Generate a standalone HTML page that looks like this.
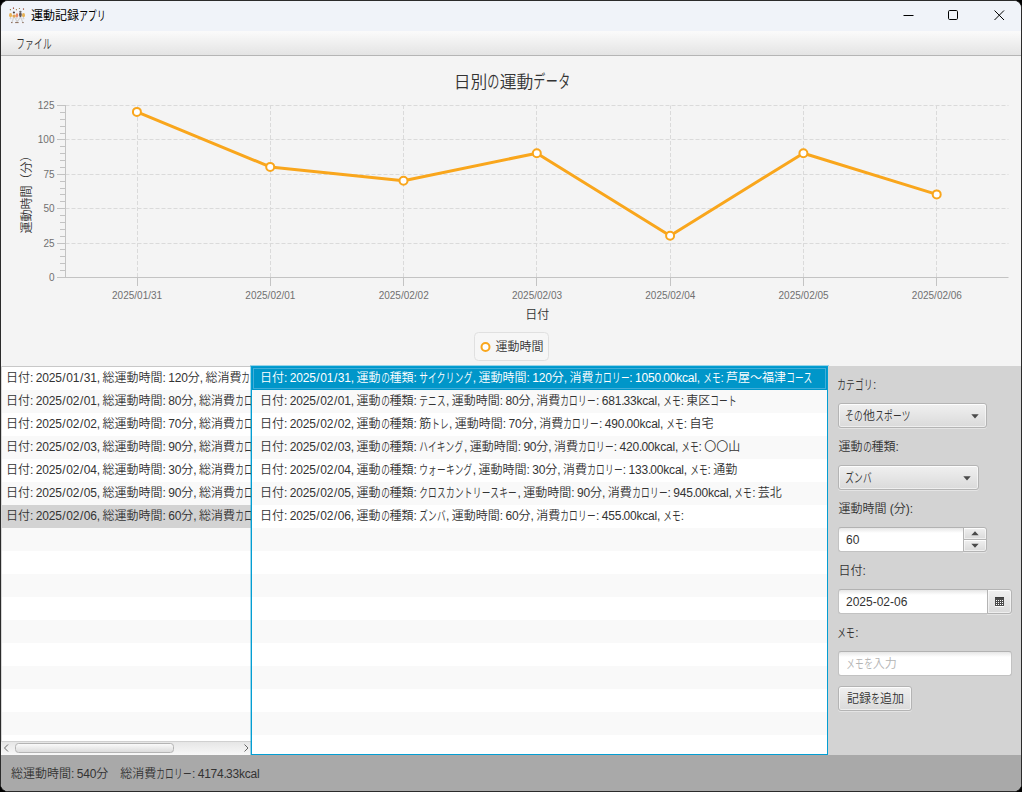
<!DOCTYPE html>
<html lang="ja"><head><meta charset="utf-8"><title>運動記録アプリ</title>
<style>
html,body{margin:0;padding:0;background:#000;}
body{width:1022px;height:792px;overflow:hidden;position:relative;
 font-family:"Liberation Sans","Noto Sans CJK JP",sans-serif;font-size:12px;color:#333;line-height:17px;font-weight:350;}
#win{position:absolute;left:0;top:0;width:1020px;height:790px;border:1px solid #2b2b2b;border-radius:8px;overflow:hidden;background:#f4f4f4;}
#pg{position:absolute;left:-1px;top:-1px;width:1022px;height:792px;}
.abs{position:absolute;}
.k{display:inline-block;white-space:nowrap;vertical-align:baseline;line-height:0;}
.k i{display:inline-block;font-style:normal;transform-origin:0 50%;white-space:nowrap;line-height:0;}
.t{position:absolute;white-space:nowrap;line-height:17px;height:17px;}
/* title bar */
#tb{position:absolute;left:0;top:0;width:1022px;height:31px;background:#f0f3f9;}
#tb .title{left:31px;top:8px;color:#000;font-weight:400;}
/* menubar */
#mb{position:absolute;left:0;top:31px;width:1022px;height:25px;box-sizing:border-box;border-top:1px solid #fafafa;border-bottom:1px solid #b5b5b5;
 background:linear-gradient(to bottom,#fafafa 0%,#e4e4e4 100%);}
#mb .t{left:16px;top:4px;}
/* chart */
#chart{position:absolute;left:0;top:56px;width:1022px;height:310px;background:#f4f4f4;}
#chart svg{position:absolute;left:0;top:-56px;}
#chart text{font-family:"Liberation Sans","Noto Sans CJK JP",sans-serif;}
/* lists */
.list{position:absolute;background:#fff;overflow:hidden;}
.row{position:absolute;left:0;right:0;height:23px;line-height:23px;white-space:nowrap;overflow:hidden;}
.row.odd{background:#f9f9f9;}
.row .tx{position:absolute;top:0;white-space:nowrap;}
#l1{left:1px;top:366px;width:250px;height:389px;}
#l1 .bd{position:absolute;left:0;top:0;width:250px;height:1px;background:#c8c8c8;}
#l1 .bl{position:absolute;left:0;top:0;width:1px;height:389px;background:#d6d6d6;}
#l2{left:250px;top:365px;width:579px;height:391px;background:rgba(3,158,211,.38);overflow:visible;}
#l2 .in{position:absolute;left:2px;top:2px;right:2px;bottom:2px;background:#fff;overflow:hidden;box-shadow:0 0 0 1px #039ed3;}
#panel{position:absolute;left:828px;top:366px;width:194px;height:389px;background:#d3d3d3;}
#status{position:absolute;left:0;top:755px;width:1022px;height:37px;background:#a9a9a9;}
/* panel controls (coords relative to #panel: page x-828, y-366) */
#panel > .t{left:10.5px;}
.btn{position:absolute;box-sizing:border-box;border:1px solid #b4b4b4;border-radius:3px;
 background:linear-gradient(to bottom,#f0f0f0,#dadada);box-shadow:inset 0 1px 0 #fdfdfd, inset 0 0 0 1px rgba(255,255,255,.55), 0 1px 0 rgba(255,255,255,.4);}
.btn .t{top:4px;}
.tf{position:absolute;box-sizing:border-box;border:1px solid #c2c2c2;border-top-color:#b2b2b2;border-radius:3px;
 background:linear-gradient(to bottom,#e6e6e6 0,#fff 5px,#fff 100%);}
.tf .t{top:4px;left:7px;}
.k i.ka{font-weight:inherit;}
b{font-weight:inherit;}
b.p{letter-spacing:-0.95px;}
b.s{margin:0 .65px;}
b.d{letter-spacing:-0.2px;}

</style></head>
<body>
<div id="win"><div id="pg">

<div id="tb">
 <svg class="abs" style="left:9px;top:7px" width="16" height="17" viewBox="0 0 16 17">
  <ellipse cx="1.4" cy="2.7" rx=".65" ry=".65" fill="#8a6a30"/><ellipse cx="4.5" cy="1.2" rx=".65" ry=".9" fill="#a85a48"/><ellipse cx="7.4" cy="2.7" rx=".6" ry=".6" fill="#9a7840"/><ellipse cx="10.4" cy="1.5" rx=".6" ry=".6" fill="#8a7038"/><ellipse cx="14.5" cy="2" rx=".65" ry=".85" fill="#a05038"/>
  <path d="M4.6 10.5L3 15.2M5.6 10.5L8.6 15.2M11 10.5L9.2 13.5L7.2 15.2M11.8 10.5L13.8 15.2M1.5 10.3v1.4M14.4 10.3v1.4M7.9 10.3v1.2" stroke="#d2d2d2" stroke-width="1.2" fill="none" stroke-linecap="round"/>
  <path d="M0.3 11.6h3M13 11.6h3" stroke="#d8d8dc" stroke-width=".5"/>
  <ellipse cx="1.55" cy="8.2" rx="1.5" ry="2.15" fill="#e8b256"/><ellipse cx="14.5" cy="8.2" rx="1.5" ry="2.15" fill="#e8b256"/>
  <ellipse cx="5.1" cy="8.9" rx="1.7" ry="1.5" fill="#e2a450"/><ellipse cx="4.9" cy="5.6" rx="1.1" ry="1" fill="#4e3e3c"/>
  <ellipse cx="7.95" cy="8.3" rx="1.25" ry="2.1" fill="#e98c6a"/>
  <ellipse cx="11.4" cy="7.6" rx="1.35" ry="2.6" fill="#5e5454"/><ellipse cx="11.4" cy="4.6" rx="1.2" ry=".9" fill="#6e6a6a"/>
  <path d="M2 15.6h1.5M6.2 15.6h3.4M13.2 15.6h1.5" stroke="#8a6a58" stroke-width="1" fill="none"/>
 </svg>
 <div class="t title">運動記録<span class="k" style="width:26.82px"><i class="ka" style="font-size:12.96px;letter-spacing:0.45px;padding-left:0.22px;transform:scaleX(0.667)">アプリ</i></span></div>
 <svg class="abs" style="left:896px;top:0" width="124" height="30" viewBox="0 0 124 30">
  <path d="M7.5 15.5h10" stroke="#000" stroke-width="1" fill="none"/>
  <rect x="52.5" y="10.5" width="9" height="9" rx="1.2" fill="none" stroke="#000" stroke-width="1"/>
  <path d="M98.5 10.5l9.5 9.5M108 10.5l-9.5 9.5" stroke="#000" stroke-width="1" fill="none"/>
 </svg>
</div>
<div id="mb"><div class="t"><span class="k" style="width:35.76px"><i class="ka" style="font-size:12.96px;letter-spacing:0.45px;padding-left:0.22px;transform:scaleX(0.667)">ファイル</i></span></div></div>

<div id="chart"><svg width="1022" height="792" viewBox="0 0 1022 792">
<path d="M66.0 243.5H1008.5" stroke="#dadada" stroke-width="1" stroke-dasharray="4 2" stroke-dashoffset=".5" fill="none"/>
<path d="M66.0 208.5H1008.5" stroke="#dadada" stroke-width="1" stroke-dasharray="4 2" stroke-dashoffset=".5" fill="none"/>
<path d="M66.0 174.5H1008.5" stroke="#dadada" stroke-width="1" stroke-dasharray="4 2" stroke-dashoffset=".5" fill="none"/>
<path d="M66.0 139.5H1008.5" stroke="#dadada" stroke-width="1" stroke-dasharray="4 2" stroke-dashoffset=".5" fill="none"/>
<path d="M66.0 105.5H1008.5" stroke="#dadada" stroke-width="1" stroke-dasharray="4 2" stroke-dashoffset=".5" fill="none"/>
<path d="M137.5 105.5V277.5" stroke="#dadada" stroke-width="1" stroke-dasharray="4 2" stroke-dashoffset=".5" fill="none"/>
<path d="M270.5 105.5V277.5" stroke="#dadada" stroke-width="1" stroke-dasharray="4 2" stroke-dashoffset=".5" fill="none"/>
<path d="M403.5 105.5V277.5" stroke="#dadada" stroke-width="1" stroke-dasharray="4 2" stroke-dashoffset=".5" fill="none"/>
<path d="M536.5 105.5V277.5" stroke="#dadada" stroke-width="1" stroke-dasharray="4 2" stroke-dashoffset=".5" fill="none"/>
<path d="M670.5 105.5V277.5" stroke="#dadada" stroke-width="1" stroke-dasharray="4 2" stroke-dashoffset=".5" fill="none"/>
<path d="M803.5 105.5V277.5" stroke="#dadada" stroke-width="1" stroke-dasharray="4 2" stroke-dashoffset=".5" fill="none"/>
<path d="M936.5 105.5V277.5" stroke="#dadada" stroke-width="1" stroke-dasharray="4 2" stroke-dashoffset=".5" fill="none"/>
<path d="M65.5 105.0V278.0" stroke="#c3c3c3" stroke-width="1" fill="none"/>
<path d="M65.0 277.5H1008.5" stroke="#c3c3c3" stroke-width="1" fill="none"/>
<path d="M57 277.5H65" stroke="#c3c3c3" stroke-width="1"/>
<text x="54.5" y="281.0" font-size="10" fill="#707070" text-anchor="end">0</text>
<path d="M60 270.5H65" stroke="#c3c3c3" stroke-width="1"/>
<path d="M60 263.5H65" stroke="#c3c3c3" stroke-width="1"/>
<path d="M60 256.5H65" stroke="#c3c3c3" stroke-width="1"/>
<path d="M60 249.5H65" stroke="#c3c3c3" stroke-width="1"/>
<path d="M57 243.5H65" stroke="#c3c3c3" stroke-width="1"/>
<text x="54.5" y="247.0" font-size="10" fill="#707070" text-anchor="end">25</text>
<path d="M60 236.5H65" stroke="#c3c3c3" stroke-width="1"/>
<path d="M60 229.5H65" stroke="#c3c3c3" stroke-width="1"/>
<path d="M60 222.5H65" stroke="#c3c3c3" stroke-width="1"/>
<path d="M60 215.5H65" stroke="#c3c3c3" stroke-width="1"/>
<path d="M57 208.5H65" stroke="#c3c3c3" stroke-width="1"/>
<text x="54.5" y="212.0" font-size="10" fill="#707070" text-anchor="end">50</text>
<path d="M60 201.5H65" stroke="#c3c3c3" stroke-width="1"/>
<path d="M60 194.5H65" stroke="#c3c3c3" stroke-width="1"/>
<path d="M60 188.5H65" stroke="#c3c3c3" stroke-width="1"/>
<path d="M60 181.5H65" stroke="#c3c3c3" stroke-width="1"/>
<path d="M57 174.5H65" stroke="#c3c3c3" stroke-width="1"/>
<text x="54.5" y="178.0" font-size="10" fill="#707070" text-anchor="end">75</text>
<path d="M60 167.5H65" stroke="#c3c3c3" stroke-width="1"/>
<path d="M60 160.5H65" stroke="#c3c3c3" stroke-width="1"/>
<path d="M60 153.5H65" stroke="#c3c3c3" stroke-width="1"/>
<path d="M60 146.5H65" stroke="#c3c3c3" stroke-width="1"/>
<path d="M57 139.5H65" stroke="#c3c3c3" stroke-width="1"/>
<text x="54.5" y="143.0" font-size="10" fill="#707070" text-anchor="end">100</text>
<path d="M60 133.5H65" stroke="#c3c3c3" stroke-width="1"/>
<path d="M60 126.5H65" stroke="#c3c3c3" stroke-width="1"/>
<path d="M60 119.5H65" stroke="#c3c3c3" stroke-width="1"/>
<path d="M60 112.5H65" stroke="#c3c3c3" stroke-width="1"/>
<path d="M57 105.5H65" stroke="#c3c3c3" stroke-width="1"/>
<text x="54.5" y="109.0" font-size="10" fill="#707070" text-anchor="end">125</text>
<path d="M137.5 277.5V286.0" stroke="#c3c3c3" stroke-width="1"/>
<text x="137.1" y="299" font-size="10" fill="#707070" text-anchor="middle">2025/01/31</text>
<path d="M270.5 277.5V286.0" stroke="#c3c3c3" stroke-width="1"/>
<text x="270.4" y="299" font-size="10" fill="#707070" text-anchor="middle">2025/02/01</text>
<path d="M403.5 277.5V286.0" stroke="#c3c3c3" stroke-width="1"/>
<text x="403.7" y="299" font-size="10" fill="#707070" text-anchor="middle">2025/02/02</text>
<path d="M536.5 277.5V286.0" stroke="#c3c3c3" stroke-width="1"/>
<text x="537.0" y="299" font-size="10" fill="#707070" text-anchor="middle">2025/02/03</text>
<path d="M670.5 277.5V286.0" stroke="#c3c3c3" stroke-width="1"/>
<text x="670.3" y="299" font-size="10" fill="#707070" text-anchor="middle">2025/02/04</text>
<path d="M803.5 277.5V286.0" stroke="#c3c3c3" stroke-width="1"/>
<text x="803.6" y="299" font-size="10" fill="#707070" text-anchor="middle">2025/02/05</text>
<path d="M936.5 277.5V286.0" stroke="#c3c3c3" stroke-width="1"/>
<text x="936.9" y="299" font-size="10" fill="#707070" text-anchor="middle">2025/02/06</text>
<polyline points="136.9,111.9 270.2,166.9 403.5,180.7 536.8,153.2 670.1,235.7 803.4,153.2 936.7,194.4" fill="none" stroke="#f9a61c" stroke-width="3" stroke-linejoin="round" stroke-linecap="butt"/>
<circle cx="136.9" cy="111.9" r="4" fill="#fff" stroke="#f9a61c" stroke-width="2"/>
<circle cx="270.2" cy="166.9" r="4" fill="#fff" stroke="#f9a61c" stroke-width="2"/>
<circle cx="403.5" cy="180.7" r="4" fill="#fff" stroke="#f9a61c" stroke-width="2"/>
<circle cx="536.8" cy="153.2" r="4" fill="#fff" stroke="#f9a61c" stroke-width="2"/>
<circle cx="670.1" cy="235.7" r="4" fill="#fff" stroke="#f9a61c" stroke-width="2"/>
<circle cx="803.4" cy="153.2" r="4" fill="#fff" stroke="#f9a61c" stroke-width="2"/>
<circle cx="936.7" cy="194.4" r="4" fill="#fff" stroke="#f9a61c" stroke-width="2"/>
<rect x="474.5" y="332.5" width="74" height="28" rx="4" fill="#f6f6f6" stroke="#e0e0e0"/>
<circle cx="485.5" cy="347" r="4" fill="#fff" stroke="#f9a61c" stroke-width="2"/>
<text x="495.5" y="351.3" font-size="12" fill="#333">運動時間</text>
<text x="537.3" y="318.8" font-size="12" fill="#333" text-anchor="middle">日付</text>
<text transform="translate(31,191.5) rotate(-90)" font-size="12" fill="#333" text-anchor="middle">運動時間（分）</text>
</svg><div class="t" style="left:453.7px;top:15px;font-size:16.8px;line-height:24px;height:24px">日別<span class="k" style="width:12.52px"><i class="hi" style="font-size:17.64px;letter-spacing:0.61px;padding-left:0.31px;transform:scaleX(0.686)">の</i></span>運動<span class="k" style="width:37.55px"><i class="ka" style="font-size:18.14px;letter-spacing:0.63px;padding-left:0.31px;transform:scaleX(0.667)">データ</i></span></div></div>
<div class="list" id="l1">
<div class="row" style="top:1px;"><span class="tx" style="left:5px">日付<b class="p">:</b> <b class="d">2025</b><b class="s">/</b><b class="d">01</b><b class="s">/</b><b class="d">31</b><b class="p">,</b> 総運動時間<b class="p">:</b> <b class="d">120</b>分<b class="p">,</b> 総消費<span class="k" style="width:35.76px"><i class="ka" style="font-size:12.96px;letter-spacing:0.45px;padding-left:0.22px;transform:scaleX(0.667)">カロリー</i></span><b class="p">:</b> <b class="d">1050</b><b class="p">.</b><b class="d">00kcal</b></span></div>
<div class="row odd" style="top:24px;"><span class="tx" style="left:5px">日付<b class="p">:</b> <b class="d">2025</b><b class="s">/</b><b class="d">02</b><b class="s">/</b><b class="d">01</b><b class="p">,</b> 総運動時間<b class="p">:</b> <b class="d">80</b>分<b class="p">,</b> 総消費<span class="k" style="width:35.76px"><i class="ka" style="font-size:12.96px;letter-spacing:0.45px;padding-left:0.22px;transform:scaleX(0.667)">カロリー</i></span><b class="p">:</b> <b class="d">681</b><b class="p">.</b><b class="d">33kcal</b></span></div>
<div class="row" style="top:47px;"><span class="tx" style="left:5px">日付<b class="p">:</b> <b class="d">2025</b><b class="s">/</b><b class="d">02</b><b class="s">/</b><b class="d">02</b><b class="p">,</b> 総運動時間<b class="p">:</b> <b class="d">70</b>分<b class="p">,</b> 総消費<span class="k" style="width:35.76px"><i class="ka" style="font-size:12.96px;letter-spacing:0.45px;padding-left:0.22px;transform:scaleX(0.667)">カロリー</i></span><b class="p">:</b> <b class="d">490</b><b class="p">.</b><b class="d">00kcal</b></span></div>
<div class="row odd" style="top:70px;"><span class="tx" style="left:5px">日付<b class="p">:</b> <b class="d">2025</b><b class="s">/</b><b class="d">02</b><b class="s">/</b><b class="d">03</b><b class="p">,</b> 総運動時間<b class="p">:</b> <b class="d">90</b>分<b class="p">,</b> 総消費<span class="k" style="width:35.76px"><i class="ka" style="font-size:12.96px;letter-spacing:0.45px;padding-left:0.22px;transform:scaleX(0.667)">カロリー</i></span><b class="p">:</b> <b class="d">420</b><b class="p">.</b><b class="d">00kcal</b></span></div>
<div class="row" style="top:93px;"><span class="tx" style="left:5px">日付<b class="p">:</b> <b class="d">2025</b><b class="s">/</b><b class="d">02</b><b class="s">/</b><b class="d">04</b><b class="p">,</b> 総運動時間<b class="p">:</b> <b class="d">30</b>分<b class="p">,</b> 総消費<span class="k" style="width:35.76px"><i class="ka" style="font-size:12.96px;letter-spacing:0.45px;padding-left:0.22px;transform:scaleX(0.667)">カロリー</i></span><b class="p">:</b> <b class="d">133</b><b class="p">.</b><b class="d">00kcal</b></span></div>
<div class="row odd" style="top:116px;"><span class="tx" style="left:5px">日付<b class="p">:</b> <b class="d">2025</b><b class="s">/</b><b class="d">02</b><b class="s">/</b><b class="d">05</b><b class="p">,</b> 総運動時間<b class="p">:</b> <b class="d">90</b>分<b class="p">,</b> 総消費<span class="k" style="width:35.76px"><i class="ka" style="font-size:12.96px;letter-spacing:0.45px;padding-left:0.22px;transform:scaleX(0.667)">カロリー</i></span><b class="p">:</b> <b class="d">945</b><b class="p">.</b><b class="d">00kcal</b></span></div>
<div class="row" style="top:139px;background:#d3d3d3;"><span class="tx" style="left:5px">日付<b class="p">:</b> <b class="d">2025</b><b class="s">/</b><b class="d">02</b><b class="s">/</b><b class="d">06</b><b class="p">,</b> 総運動時間<b class="p">:</b> <b class="d">60</b>分<b class="p">,</b> 総消費<span class="k" style="width:35.76px"><i class="ka" style="font-size:12.96px;letter-spacing:0.45px;padding-left:0.22px;transform:scaleX(0.667)">カロリー</i></span><b class="p">:</b> <b class="d">455</b><b class="p">.</b><b class="d">00kcal</b></span></div>
<div class="row odd" style="top:162px;"></div>
<div class="row" style="top:185px;"></div>
<div class="row odd" style="top:208px;"></div>
<div class="row" style="top:231px;"></div>
<div class="row odd" style="top:254px;"></div>
<div class="row" style="top:277px;"></div>
<div class="row odd" style="top:300px;"></div>
<div class="row" style="top:323px;"></div>
<div class="row odd" style="top:346px;"></div>
<div class="row" style="top:369px;"></div>
<div class="bd"></div><div class="bl"></div>
<div class="abs" style="left:0;top:375px;width:250px;height:14px;background:linear-gradient(to bottom,#e6e6e6,#f8f8f8);border-top:1px solid #d0d0d0;box-sizing:border-box"></div>
<div class="abs" style="left:14px;top:377px;width:159px;height:10px;box-sizing:border-box;border:1px solid #b4b4b4;border-radius:3.5px;background:linear-gradient(to bottom,#fafafa,#dcdcdc)"></div>
<svg class="abs" style="left:0;top:375px" width="250" height="14" viewBox="0 0 250 14"><path d="M7 3.5L3.5 7L7 10.5M243.5 3.5L247 7L243.5 10.5" fill="none" stroke="#666" stroke-width="1"/></svg>
</div>
<div class="list" id="l2"><div class="in">
<div class="row" style="top:0px;background:#0096c9;color:#fff;box-shadow:inset 0 0 0 1px #0096c9, inset 0 0 0 2px #42aed9;"><span class="tx" style="left:8px">日付<b class="p">:</b> <b class="d">2025</b><b class="s">/</b><b class="d">01</b><b class="s">/</b><b class="d">31</b><b class="p">,</b> 運動<span class="k" style="width:8.94px"><i class="hi" style="font-size:12.6px;letter-spacing:0.44px;padding-left:0.22px;transform:scaleX(0.686)">の</i></span>種類<b class="p">:</b> <span class="k" style="width:53.64px"><i class="ka" style="font-size:12.96px;letter-spacing:0.45px;padding-left:0.22px;transform:scaleX(0.667)">サイクリング</i></span><b class="p">,</b> 運動時間<b class="p">:</b> <b class="d">120</b>分<b class="p">,</b> 消費<span class="k" style="width:35.76px"><i class="ka" style="font-size:12.96px;letter-spacing:0.45px;padding-left:0.22px;transform:scaleX(0.667)">カロリー</i></span><b class="p">:</b> <b class="d">1050</b><b class="p">.</b><b class="d">00kcal</b><b class="p">,</b> <span class="k" style="width:17.88px"><i class="ka" style="font-size:12.96px;letter-spacing:0.45px;padding-left:0.22px;transform:scaleX(0.667)">メモ</i></span><b class="p">:</b> 芦屋～福津<span class="k" style="width:26.82px"><i class="ka" style="font-size:12.96px;letter-spacing:0.45px;padding-left:0.22px;transform:scaleX(0.667)">コース</i></span></span></div>
<div class="row odd" style="top:23px;"><span class="tx" style="left:8px">日付<b class="p">:</b> <b class="d">2025</b><b class="s">/</b><b class="d">02</b><b class="s">/</b><b class="d">01</b><b class="p">,</b> 運動<span class="k" style="width:8.94px"><i class="hi" style="font-size:12.6px;letter-spacing:0.44px;padding-left:0.22px;transform:scaleX(0.686)">の</i></span>種類<b class="p">:</b> <span class="k" style="width:26.82px"><i class="ka" style="font-size:12.96px;letter-spacing:0.45px;padding-left:0.22px;transform:scaleX(0.667)">テニス</i></span><b class="p">,</b> 運動時間<b class="p">:</b> <b class="d">80</b>分<b class="p">,</b> 消費<span class="k" style="width:35.76px"><i class="ka" style="font-size:12.96px;letter-spacing:0.45px;padding-left:0.22px;transform:scaleX(0.667)">カロリー</i></span><b class="p">:</b> <b class="d">681</b><b class="p">.</b><b class="d">33kcal</b><b class="p">,</b> <span class="k" style="width:17.88px"><i class="ka" style="font-size:12.96px;letter-spacing:0.45px;padding-left:0.22px;transform:scaleX(0.667)">メモ</i></span><b class="p">:</b> 東区<span class="k" style="width:26.82px"><i class="ka" style="font-size:12.96px;letter-spacing:0.45px;padding-left:0.22px;transform:scaleX(0.667)">コート</i></span></span></div>
<div class="row" style="top:46px;"><span class="tx" style="left:8px">日付<b class="p">:</b> <b class="d">2025</b><b class="s">/</b><b class="d">02</b><b class="s">/</b><b class="d">02</b><b class="p">,</b> 運動<span class="k" style="width:8.94px"><i class="hi" style="font-size:12.6px;letter-spacing:0.44px;padding-left:0.22px;transform:scaleX(0.686)">の</i></span>種類<b class="p">:</b> 筋<span class="k" style="width:17.88px"><i class="ka" style="font-size:12.96px;letter-spacing:0.45px;padding-left:0.22px;transform:scaleX(0.667)">トレ</i></span><b class="p">,</b> 運動時間<b class="p">:</b> <b class="d">70</b>分<b class="p">,</b> 消費<span class="k" style="width:35.76px"><i class="ka" style="font-size:12.96px;letter-spacing:0.45px;padding-left:0.22px;transform:scaleX(0.667)">カロリー</i></span><b class="p">:</b> <b class="d">490</b><b class="p">.</b><b class="d">00kcal</b><b class="p">,</b> <span class="k" style="width:17.88px"><i class="ka" style="font-size:12.96px;letter-spacing:0.45px;padding-left:0.22px;transform:scaleX(0.667)">メモ</i></span><b class="p">:</b> 自宅</span></div>
<div class="row odd" style="top:69px;"><span class="tx" style="left:8px">日付<b class="p">:</b> <b class="d">2025</b><b class="s">/</b><b class="d">02</b><b class="s">/</b><b class="d">03</b><b class="p">,</b> 運動<span class="k" style="width:8.94px"><i class="hi" style="font-size:12.6px;letter-spacing:0.44px;padding-left:0.22px;transform:scaleX(0.686)">の</i></span>種類<b class="p">:</b> <span class="k" style="width:44.7px"><i class="ka" style="font-size:12.96px;letter-spacing:0.45px;padding-left:0.22px;transform:scaleX(0.667)">ハイキング</i></span><b class="p">,</b> 運動時間<b class="p">:</b> <b class="d">90</b>分<b class="p">,</b> 消費<span class="k" style="width:35.76px"><i class="ka" style="font-size:12.96px;letter-spacing:0.45px;padding-left:0.22px;transform:scaleX(0.667)">カロリー</i></span><b class="p">:</b> <b class="d">420</b><b class="p">.</b><b class="d">00kcal</b><b class="p">,</b> <span class="k" style="width:17.88px"><i class="ka" style="font-size:12.96px;letter-spacing:0.45px;padding-left:0.22px;transform:scaleX(0.667)">メモ</i></span><b class="p">:</b> 〇〇山</span></div>
<div class="row" style="top:92px;"><span class="tx" style="left:8px">日付<b class="p">:</b> <b class="d">2025</b><b class="s">/</b><b class="d">02</b><b class="s">/</b><b class="d">04</b><b class="p">,</b> 運動<span class="k" style="width:8.94px"><i class="hi" style="font-size:12.6px;letter-spacing:0.44px;padding-left:0.22px;transform:scaleX(0.686)">の</i></span>種類<b class="p">:</b> <span class="k" style="width:53.64px"><i class="ka" style="font-size:12.96px;letter-spacing:0.45px;padding-left:0.22px;transform:scaleX(0.667)">ウォーキング</i></span><b class="p">,</b> 運動時間<b class="p">:</b> <b class="d">30</b>分<b class="p">,</b> 消費<span class="k" style="width:35.76px"><i class="ka" style="font-size:12.96px;letter-spacing:0.45px;padding-left:0.22px;transform:scaleX(0.667)">カロリー</i></span><b class="p">:</b> <b class="d">133</b><b class="p">.</b><b class="d">00kcal</b><b class="p">,</b> <span class="k" style="width:17.88px"><i class="ka" style="font-size:12.96px;letter-spacing:0.45px;padding-left:0.22px;transform:scaleX(0.667)">メモ</i></span><b class="p">:</b> 通勤</span></div>
<div class="row odd" style="top:115px;"><span class="tx" style="left:8px">日付<b class="p">:</b> <b class="d">2025</b><b class="s">/</b><b class="d">02</b><b class="s">/</b><b class="d">05</b><b class="p">,</b> 運動<span class="k" style="width:8.94px"><i class="hi" style="font-size:12.6px;letter-spacing:0.44px;padding-left:0.22px;transform:scaleX(0.686)">の</i></span>種類<b class="p">:</b> <span class="k" style="width:98.34px"><i class="ka" style="font-size:12.96px;letter-spacing:0.45px;padding-left:0.22px;transform:scaleX(0.667)">クロスカントリースキー</i></span><b class="p">,</b> 運動時間<b class="p">:</b> <b class="d">90</b>分<b class="p">,</b> 消費<span class="k" style="width:35.76px"><i class="ka" style="font-size:12.96px;letter-spacing:0.45px;padding-left:0.22px;transform:scaleX(0.667)">カロリー</i></span><b class="p">:</b> <b class="d">945</b><b class="p">.</b><b class="d">00kcal</b><b class="p">,</b> <span class="k" style="width:17.88px"><i class="ka" style="font-size:12.96px;letter-spacing:0.45px;padding-left:0.22px;transform:scaleX(0.667)">メモ</i></span><b class="p">:</b> 芸北</span></div>
<div class="row" style="top:138px;"><span class="tx" style="left:8px">日付<b class="p">:</b> <b class="d">2025</b><b class="s">/</b><b class="d">02</b><b class="s">/</b><b class="d">06</b><b class="p">,</b> 運動<span class="k" style="width:8.94px"><i class="hi" style="font-size:12.6px;letter-spacing:0.44px;padding-left:0.22px;transform:scaleX(0.686)">の</i></span>種類<b class="p">:</b> <span class="k" style="width:26.82px"><i class="ka" style="font-size:12.96px;letter-spacing:0.45px;padding-left:0.22px;transform:scaleX(0.667)">ズンバ</i></span><b class="p">,</b> 運動時間<b class="p">:</b> <b class="d">60</b>分<b class="p">,</b> 消費<span class="k" style="width:35.76px"><i class="ka" style="font-size:12.96px;letter-spacing:0.45px;padding-left:0.22px;transform:scaleX(0.667)">カロリー</i></span><b class="p">:</b> <b class="d">455</b><b class="p">.</b><b class="d">00kcal</b><b class="p">,</b> <span class="k" style="width:17.88px"><i class="ka" style="font-size:12.96px;letter-spacing:0.45px;padding-left:0.22px;transform:scaleX(0.667)">メモ</i></span><b class="p">:</b> </span></div>
<div class="row odd" style="top:161px;"></div>
<div class="row" style="top:184px;"></div>
<div class="row odd" style="top:207px;"></div>
<div class="row" style="top:230px;"></div>
<div class="row odd" style="top:253px;"></div>
<div class="row" style="top:276px;"></div>
<div class="row odd" style="top:299px;"></div>
<div class="row" style="top:322px;"></div>
<div class="row odd" style="top:345px;"></div>
<div class="row" style="top:368px;"></div>
</div></div>
<div id="panel">
<div class="t" style="top:11px;margin-left:-1.3px"><span class="k" style="width:35.76px"><i class="ka" style="font-size:12.96px;letter-spacing:0.45px;padding-left:0.22px;transform:scaleX(0.667)">カテゴリ</i></span><b class="p">:</b></div>
<div class="btn" style="left:10px;top:37px;width:149px;height:25px"><div class="t" style="left:6px"><span class="k" style="width:17.88px"><i class="hi" style="font-size:12.6px;letter-spacing:0.44px;padding-left:0.22px;transform:scaleX(0.686)">その</i></span>他<span class="k" style="width:35.76px"><i class="ka" style="font-size:12.96px;letter-spacing:0.45px;padding-left:0.22px;transform:scaleX(0.667)">スポーツ</i></span></div><svg class="abs" style="left:132px;top:10px" width="8" height="5" viewBox="0 0 8 5"><path d="M0.3 0.3h7.4L4 4.6z" fill="#4a4a4a"/></svg></div>
<div class="t" style="top:73px;margin-left:0px">運動<span class="k" style="width:8.94px"><i class="hi" style="font-size:12.6px;letter-spacing:0.44px;padding-left:0.22px;transform:scaleX(0.686)">の</i></span>種類<b class="p">:</b></div>
<div class="btn" style="left:10px;top:99px;width:141px;height:25px"><div class="t" style="left:6px"><span class="k" style="width:26.82px"><i class="ka" style="font-size:12.96px;letter-spacing:0.45px;padding-left:0.22px;transform:scaleX(0.667)">ズンバ</i></span></div><svg class="abs" style="left:124px;top:10px" width="8" height="5" viewBox="0 0 8 5"><path d="M0.3 0.3h7.4L4 4.6z" fill="#4a4a4a"/></svg></div>
<div class="t" style="top:135px;margin-left:0px">運動時間 (分)<b class="p">:</b></div>
<div class="tf" style="left:10px;top:161px;width:126px;height:25px;border-radius:3px 0 0 3px;border-right:none"><div class="t">60</div></div>
<div class="btn" style="left:135px;top:161px;width:24px;height:13px;border-radius:0 3px 0 0"></div>
<div class="btn" style="left:135px;top:173px;width:24px;height:13px;border-radius:0 0 3px 0"></div>
<svg class="abs" style="left:143px;top:165px" width="8" height="17" viewBox="0 0 8 17"><path d="M0.3 4.3h7.4L4 0.3z M0.3 12.7h7.4L4 16.7z" fill="#4a4a4a"/></svg>
<div class="t" style="top:197px;margin-left:0px">日付<b class="p">:</b></div>
<div class="tf" style="left:10px;top:223px;width:150px;height:25px;border-radius:3px 0 0 3px;border-right:none"><div class="t">2025-02-06</div></div>
<div class="btn" style="left:159px;top:223px;width:25px;height:25px;border-radius:0 3px 3px 0"></div>
<svg class="abs" style="left:167px;top:231px" width="9" height="10" viewBox="0 0 9 10"><rect x="0" y="0" width="9" height="9" fill="#4b4b4b"/><rect x="0" y="0" width="9" height="1" fill="#3d3d3d"/><rect x="0" y="9" width="9" height="1" fill="#fff" fill-opacity=".85"/><rect x="1" y="3" width="1" height="1" fill="#fff"/><rect x="3" y="3" width="1" height="1" fill="#fff"/><rect x="5" y="3" width="1" height="1" fill="#fff"/><rect x="7" y="3" width="1" height="1" fill="#fff"/><rect x="1" y="5" width="1" height="1" fill="#fff"/><rect x="3" y="5" width="1" height="1" fill="#fff"/><rect x="5" y="5" width="1" height="1" fill="#fff"/><rect x="7" y="5" width="1" height="1" fill="#fff"/><rect x="1" y="7" width="1" height="1" fill="#fff"/><rect x="3" y="7" width="1" height="1" fill="#fff"/><rect x="5" y="7" width="1" height="1" fill="#fff"/><rect x="7" y="7" width="1" height="1" fill="#fff"/></svg>
<div class="t" style="top:259px;margin-left:-1.2px"><span class="k" style="width:17.88px"><i class="ka" style="font-size:12.96px;letter-spacing:0.45px;padding-left:0.22px;transform:scaleX(0.667)">メモ</i></span><b class="p">:</b></div>
<div class="tf" style="left:10px;top:285px;width:174px;height:25px"><div class="t" style="color:#b4b4b4"><span class="k" style="width:17.88px"><i class="ka" style="font-size:12.96px;letter-spacing:0.45px;padding-left:0.22px;transform:scaleX(0.667)">メモ</i></span><span class="k" style="width:8.94px"><i class="hi" style="font-size:12.6px;letter-spacing:0.44px;padding-left:0.22px;transform:scaleX(0.686)">を</i></span>入力</div></div>
<div class="btn" style="left:10px;top:320px;width:74px;height:25px"><div class="t" style="left:8px">記録<span class="k" style="width:8.94px"><i class="hi" style="font-size:12.6px;letter-spacing:0.44px;padding-left:0.22px;transform:scaleX(0.686)">を</i></span>追加</div></div>
</div>
<div id="status"><div class="t" style="left:11px;top:11px">総運動時間<b class="p">:</b> <b class="d">540</b>分　総消費<span class="k" style="width:35.76px"><i class="ka" style="font-size:12.96px;letter-spacing:0.45px;padding-left:0.22px;transform:scaleX(0.667)">カロリー</i></span><b class="p">:</b> <b class="d">4174</b><b class="p">.</b><b class="d">33kcal</b></div></div>
</div></div>
</body></html>
